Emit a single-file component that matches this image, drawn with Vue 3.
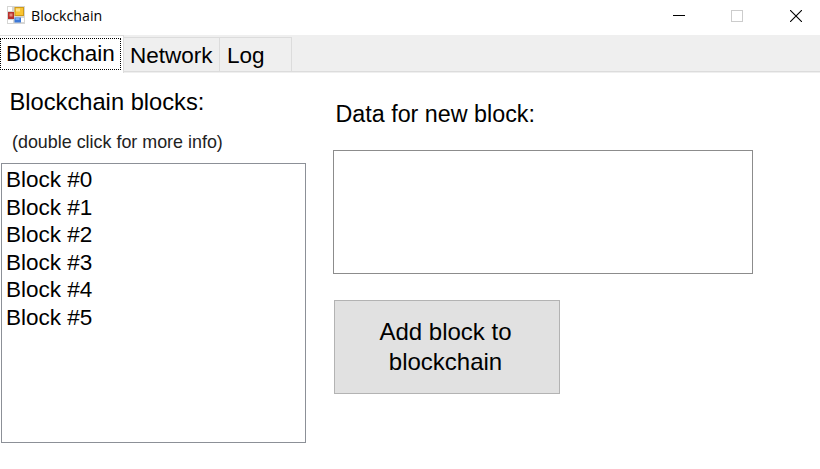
<script setup>
import { ref } from 'vue'

const tabs = ['Blockchain', 'Network', 'Log']
const active = ref('Blockchain')
const blocks = [0, 1, 2, 3, 4, 5]
const data = ref('')
</script>

<template>
  <div class="window">
    <header class="titlebar">
      <svg class="app-icon" width="18" height="18" viewBox="0 0 18 18">
        <rect width="18" height="18" fill="#d6d6d4" />
        <rect x="1" y="1" width="4" height="4" fill="#fff" />
        <rect x="1" y="14" width="5" height="3" fill="#fff" />
        <rect x="14" y="12" width="3" height="4" fill="#fff" />
        <rect x="1" y="6" width="6" height="7" fill="#b8302c" />
        <rect x="2.5" y="7.500" width="3" height="3" fill="#e48a80" />
        <rect x="7.500" y="1" width="9.500" height="9" fill="#d09a18" />
        <rect x="8.500" y="2" width="7.500" height="7" fill="#f9c432" />
        <rect x="9" y="2.500" width="4" height="3" fill="#fde08a" />
        <rect x="7.500" y="11.500" width="6.500" height="5" fill="#3c78d8" />
        <rect x="8.500" y="12" width="4" height="2" fill="#78a9f0" />
      </svg>
      <span class="title">Blockchain</span>
      <div class="controls">
        <svg width="12" height="12" viewBox="0 0 12 12"><path d="M0 5.500H12" stroke="#000" /></svg>
        <svg width="12" height="12" viewBox="0 0 12 12"><rect x=".5" y=".5" width="11" height="11" fill="none" stroke="#ccc" /></svg>
        <svg class="close" width="12" height="12" viewBox="0 0 12 12"><path d="M0 0L12 12M12 0L0 12" stroke="#000" stroke-width="1.100" /></svg>
      </div>
    </header>

    <nav class="tabs">
      <button v-for="t in tabs" :key="t" class="tab" :class="[t.toLowerCase(), { active: t === active }]" @click="active = t">
        <span>{{ t }}</span>
      </button>
    </nav>

    <main class="page">
      <section class="left">
        <h1 class="heading">Blockchain blocks:</h1>
        <p class="hint">(double click for more info)</p>
        <ul class="list">
          <li v-for="n in blocks" :key="n">Block #{{ n }}</li>
        </ul>
      </section>
      <section class="right">
        <label class="label" for="data">Data for new block:</label>
        <textarea id="data" v-model="data" class="input"></textarea>
        <button class="add">Add block to<br>blockchain</button>
      </section>
    </main>
  </div>
</template>

<style>
body { margin: 0; background: #fff; }
</style>

<style scoped>
* { box-sizing: border-box; }
.window {
  width: 820px;
  height: 469px;
  overflow: hidden;
  background: #fff;
  color: #000;
  font-family: "Liberation Sans", Arial, sans-serif;
  font-size: 22.5px;
}
button { font: inherit; color: inherit; border-radius: 0; }
.titlebar { display: flex; align-items: flex-start; height: 35px; padding: 6px 18px 0 7px; }
.app-icon { display: block; }
.title { margin-left: 6px; font: 14.2px/20px "Open Sans", "Noto Sans", sans-serif; }
.controls { display: flex; gap: 46px; margin: 4px 0 0 auto; }
.controls svg { display: block; }
.controls .close { margin-left: 1px; }
.tabs { display: flex; align-items: flex-end; height: 38px; background: linear-gradient(#efefef 36px, #dcdcdc 36px, #dcdcdc 37px, #efefef 37px); }
.tab {
  height: 35px;
  padding: 0 0 0 6px;
  margin-bottom: 1px;
  border: 1px solid #dcdcdc;
  border-left: 0;
  background: #efefef;
  text-align: left;
  line-height: 35px;
}
.tab.active { width: 124px; height: 38px; margin: 0; padding: 0; border-bottom: 0; background: #fff; }
.tab.active span { display: block; width: 121px; height: 32px; margin-top: -2px; padding-left: 5px; border: 1px dotted #000; line-height: 29px; }
.network { width: 96px; }
.log { width: 72px; padding-left: 7px; }
.page { display: flex; }
.left { width: 305px; padding-left: 1px; }
.heading { margin: 15px 0 0 8.5px; font-size: 23.7px; font-weight: 400; line-height: 28px; white-space: nowrap; }
.hint { margin: 15px 0 0 11px; font-size: 17.9px; line-height: 22px; color: #222; white-space: nowrap; }
.list { width: 305px; height: 280px; margin: 10px 0 0; padding: 2px 0 0 4px; border: 1px solid #8c9097; list-style: none; font-size: 22.5px; line-height: 27.5px; }
.right { display: flex; flex-direction: column; align-items: flex-start; padding-left: 28px; }
.label { margin: 26px 0 0 2.5px; font-size: 23.3px; line-height: 30px; white-space: nowrap; }
.input { display: block; width: 420px; height: 124px; margin-top: 21px; border: 1px solid #8c8c8c; border-radius: 0; background: #fff; resize: none; outline: none; }
.add { width: 226px; height: 94px; margin: 26px 0 0 1px; padding: 0 3px 0 0; border: 1px solid #b3b3b3; background: #e1e1e1; font-size: 24px; line-height: 30px; }
</style>
